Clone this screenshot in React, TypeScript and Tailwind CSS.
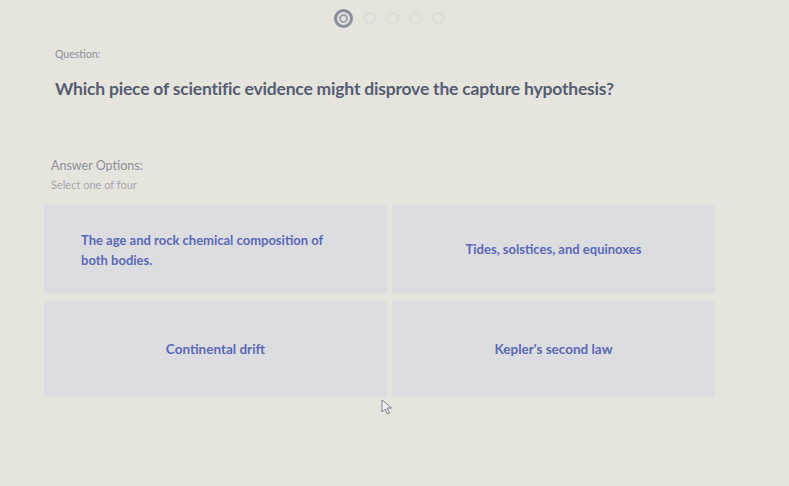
import React from "react";

export default function App() {
  return (
    <div
      className="w-[789px] h-[486px] bg-[#e5e5de] relative overflow-hidden"
      style={{ fontFamily: "Lato, 'Open Sans', sans-serif" }}
    >
      <div className="flex justify-center items-center gap-[10px] pt-[9px] pr-[10px]">
        <div className="w-[19px] h-[19px] rounded-full border-[3px] border-[#8a8f9c] flex items-center justify-center">
          <div className="w-[9px] h-[9px] rounded-full border-[2px] border-[#9da1ab]" />
        </div>
        <div className="w-[13px] h-[13px] rounded-full border-[2px] border-[#dcddd9]" />
        <div className="w-[13px] h-[13px] rounded-full border-[2px] border-[#dcddd9]" />
        <div className="w-[13px] h-[13px] rounded-full border-[2px] border-[#dcddd9]" />
        <div className="w-[13px] h-[13px] rounded-full border-[2px] border-[#dcddd9]" />
      </div>

      <div className="pl-[55px] pt-[19px]">
        <div className="text-[10.5px] text-[#8a8d95] leading-[14px]">Question:</div>
        <div className="mt-[17px] text-[17.5px] font-bold text-[#565c72] leading-[22px] tracking-[-0.2px]">
          Which piece of scientific evidence might disprove the capture hypothesis?
        </div>
      </div>

      <div className="pl-[51px] pt-[58px]">
        <div className="text-[12.5px] text-[#8d9097] leading-[16px]">Answer Options:</div>
        <div className="mt-[4px] text-[11px] text-[#a4a6aa] leading-[14px]">Select one of four</div>
      </div>

      <div className="ml-[44px] mt-[13px] w-[671px] grid grid-cols-[343px_1fr] gap-x-[5px] gap-y-[8px]">
        <div className="h-[89px] bg-[#dcdde1] flex items-center pl-[37px]">
          <span className="text-[13px] font-bold text-[#5b68b6] leading-[20px] max-w-[265px]">
            The age and rock chemical composition of both bodies.
          </span>
        </div>
        <div className="h-[89px] bg-[#dcdde1] flex items-center justify-center">
          <span className="text-[13px] font-bold text-[#5b68b6]">Tides, solstices, and equinoxes</span>
        </div>
        <div className="h-[95px] bg-[#dcdde1] flex items-center justify-center">
          <span className="text-[13.5px] font-bold text-[#5b68b6]">Continental drift</span>
        </div>
        <div className="h-[95px] bg-[#dcdde1] flex items-center justify-center">
          <span className="text-[13.5px] font-bold text-[#5b68b6]">Kepler's second law</span>
        </div>
      </div>

      <svg className="absolute left-[381px] top-[399px]" width="14" height="16" viewBox="0 0 14 16">
        <path d="M1 1 L1 13 L4 10 L6.5 15 L8.5 14 L6 9 L10.5 9 Z" fill="#f2f2ee" stroke="#7b7e86" strokeWidth="1" />
      </svg>
    </div>
  );
}
